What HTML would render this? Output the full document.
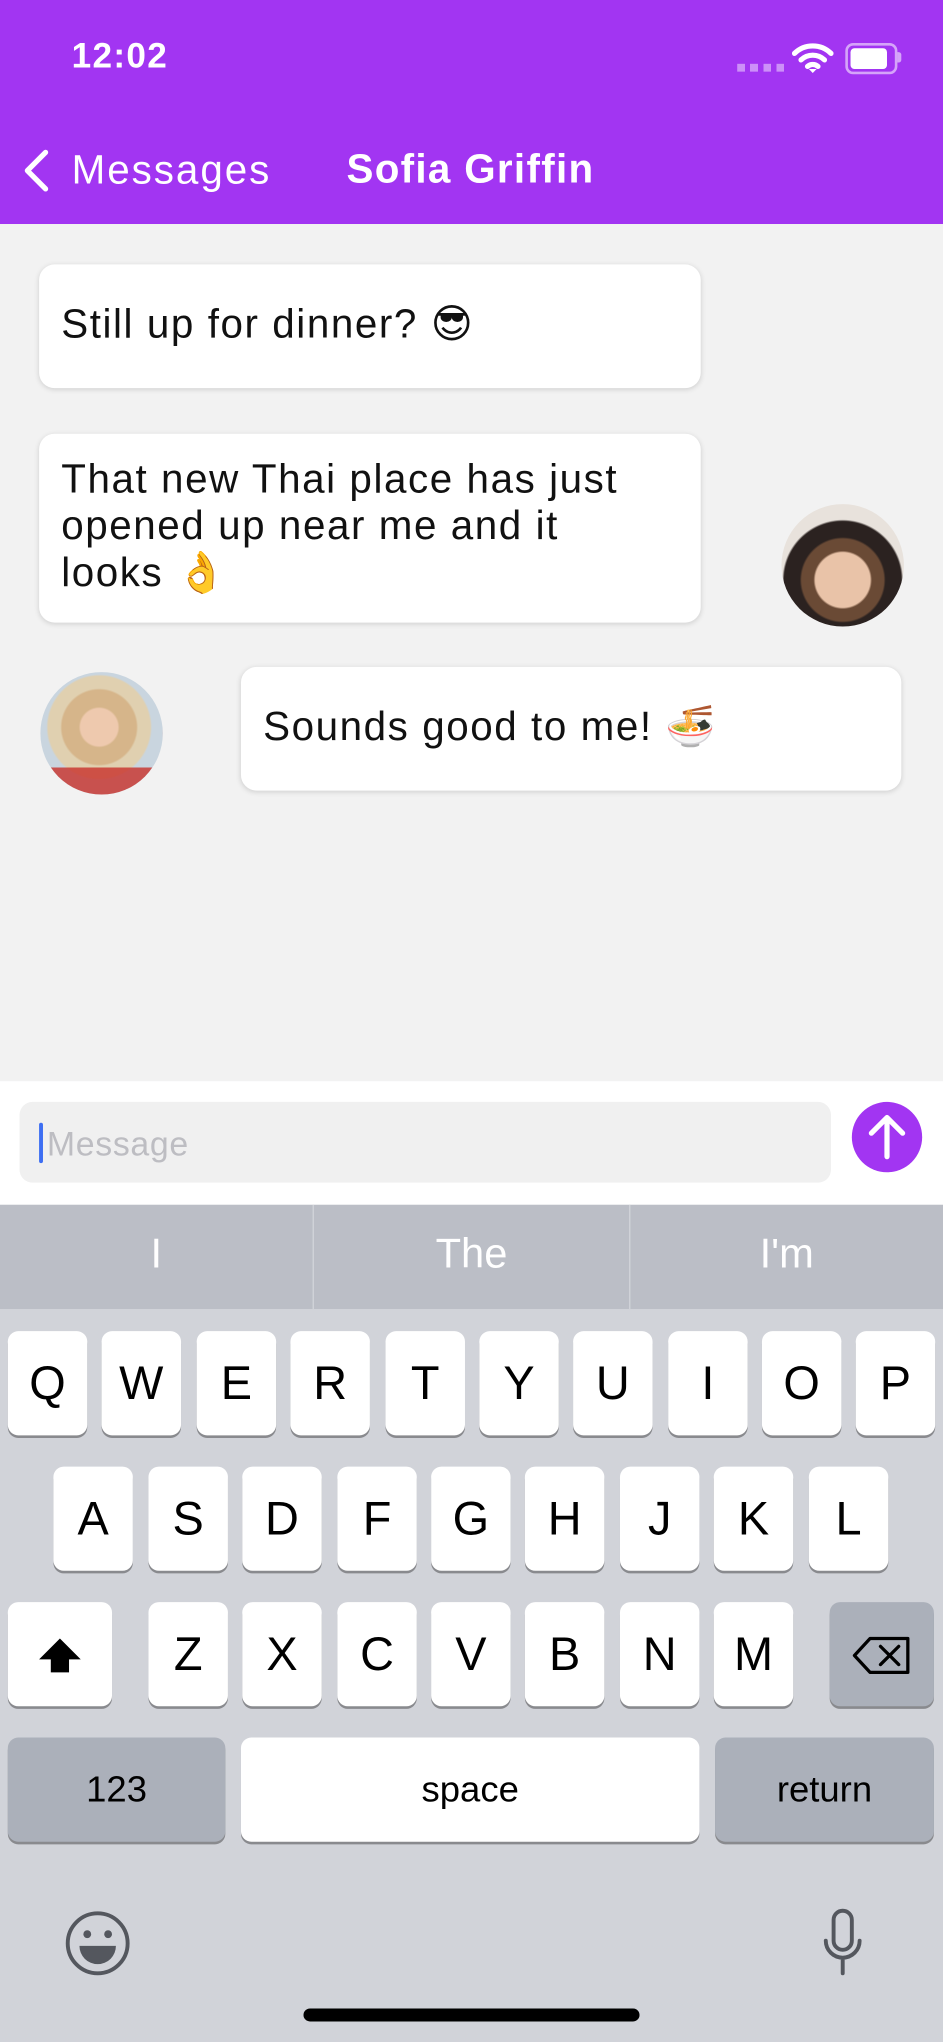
<!DOCTYPE html>
<html><head><meta charset="utf-8"><style>
html,body{margin:0;padding:0;width:943px;height:2042px;overflow:hidden;background:#d1d3d9}
#w{position:absolute;left:0;top:0;width:724px;height:1568px;transform:scale(1.30249);transform-origin:0 0;font-family:"Liberation Sans","DejaVu Sans",sans-serif}
.a{position:absolute}
.hdr{left:0;top:0;width:724px;height:172px;background:#a235f2;color:#fff}
.chat{left:0;top:172px;width:724px;height:658px;background:#f2f2f2}
.b{background:#fff;border-radius:12px;box-shadow:0 1px 4px rgba(0,0,0,.15);font-size:31px;letter-spacing:1.2px;color:#111;line-height:36px;box-sizing:border-box;padding-left:17px;padding-right:40px}
.key{position:absolute;background:#fff;border-radius:8px;box-shadow:0 2px 0 #898a8e;text-align:center;font-size:36px;line-height:80px;color:#000;height:80px;width:61px}
.dk{background:#abb0ba}
.av{border-radius:50%;width:94px;height:94px}
</style></head><body><div id="w">
<div class="a hdr">
 <div class="a" style="left:55px;top:28px;font-size:27px;font-weight:bold;letter-spacing:1px">12:02</div>
 <div class="a" style="left:566px;top:49px;width:36px;height:6px;background:repeating-linear-gradient(90deg,rgba(255,255,255,.45) 0 6px,transparent 6px 10px)"></div>
 <svg class="a" style="left:608px;top:32px" width="32" height="24" viewBox="0 0 32 24"><path d="M2 9a20 20 0 0 1 28 0M7 14a13 13 0 0 1 18 0M12 19a6 6 0 0 1 8 0" stroke="#fff" stroke-width="4" fill="none" stroke-linecap="round"/><path d="M13 21l3 3 3-3z" fill="#fff"/></svg>
 <div class="a" style="left:649px;top:33px;width:36px;height:20px;border:2px solid rgba(255,255,255,.55);border-radius:6px"></div>
 <div class="a" style="left:653px;top:37px;width:28px;height:16px;background:#fff;border-radius:3px"></div>
 <div class="a" style="left:689px;top:40px;width:3px;height:8px;background:rgba(255,255,255,.55);border-radius:0 2px 2px 0"></div>
 <svg class="a" style="left:16px;top:114px" width="24" height="34" viewBox="0 0 24 34"><path d="M19 3L5 17l14 14" stroke="#fff" stroke-width="4" fill="none" stroke-linecap="round" stroke-linejoin="round"/></svg>
 <div class="a" style="left:55px;top:113px;font-size:31px;letter-spacing:1.5px">Messages</div>
 <div class="a" style="left:266px;top:112px;font-size:31px;font-weight:bold;letter-spacing:1px">Sofia Griffin</div>
</div>
<div class="a chat"></div>
<div class="a b" style="left:30px;top:203px;width:508px;height:95px;padding-top:28px">Still up for dinner? 😎</div>
<div class="a b" style="left:30px;top:333px;width:508px;height:145px;padding-top:17px;line-height:36px">That new Thai place has just opened up near me and it looks 👌</div>
<div class="a av" style="left:600px;top:387px;background:radial-gradient(circle at 50% 62%,#e9c3a8 0 28%,#6a4a35 30% 42%,#2b2220 44% 60%,#e8e2dc 62%)"></div>
<div class="a av" style="left:31px;top:516px;background:radial-gradient(circle at 48% 45%,#eec9ae 0 20%,#d6b58a 22% 40%,#e0d0b0 42% 55%,#c9d5df 57%),linear-gradient(#ccd,#c33)"></div>
<div class="a av" style="left:31px;top:516px;background:linear-gradient(transparent 78%,#c8302a 78%);opacity:.8"></div>
<div class="a b" style="left:185px;top:512px;width:507px;height:95px;padding-top:28px">Sounds good to me! 🍜</div>
<div class="a" style="left:0;top:830px;width:724px;height:95px;background:#fff"></div>
<div class="a" style="left:15px;top:846px;width:623px;height:62px;background:#f0f0f0;border-radius:10px"></div>
<div class="a" style="left:30px;top:862px;width:3px;height:31px;background:#3d6ef2;border-radius:2px"></div>
<div class="a" style="left:36px;top:863px;font-size:26px;letter-spacing:.5px;color:#bdbdc2">Message</div>
<div class="a" style="left:654px;top:846px;width:54px;height:54px;border-radius:50%;background:#a235f2"></div>
<svg class="a" style="left:654px;top:846px" width="54" height="54" viewBox="0 0 54 54"><path d="M27 42V12M15 24l12-12 12 12" stroke="#fff" stroke-width="4" fill="none" stroke-linecap="round" stroke-linejoin="round"/></svg>
<div class="a" style="left:0;top:925px;width:724px;height:80px;background:#bbbec6;color:#fff;font-size:32px">
 <div class="a" style="left:0;width:240px;text-align:center;top:19px">I</div>
 <div class="a" style="left:240px;top:0;width:1px;height:80px;background:#d3d5da"></div>
 <div class="a" style="left:241px;width:242px;text-align:center;top:19px">The</div>
 <div class="a" style="left:483px;top:0;width:1px;height:80px;background:#d3d5da"></div>
 <div class="a" style="left:484px;width:240px;text-align:center;top:19px">I'm</div>
</div>
<div class="a" style="left:0;top:1005px;width:724px;height:563px;background:#d1d3d9">
<div style="position:relative;top:-1005px">
 <div class="key" style="left:6px;top:1022px">Q</div><div class="key" style="left:78px;top:1022px">W</div><div class="key" style="left:151px;top:1022px">E</div><div class="key" style="left:223px;top:1022px">R</div><div class="key" style="left:296px;top:1022px">T</div><div class="key" style="left:368px;top:1022px">Y</div><div class="key" style="left:440px;top:1022px">U</div><div class="key" style="left:513px;top:1022px">I</div><div class="key" style="left:585px;top:1022px">O</div><div class="key" style="left:657px;top:1022px">P</div>
 <div class="key" style="left:41px;top:1126px">A</div><div class="key" style="left:114px;top:1126px">S</div><div class="key" style="left:186px;top:1126px">D</div><div class="key" style="left:259px;top:1126px">F</div><div class="key" style="left:331px;top:1126px">G</div><div class="key" style="left:403px;top:1126px">H</div><div class="key" style="left:476px;top:1126px">J</div><div class="key" style="left:548px;top:1126px">K</div><div class="key" style="left:621px;top:1126px">L</div>
 <div class="key" style="left:6px;top:1230px;width:80px"><svg width="40" height="36" viewBox="0 0 40 36" style="margin-top:24px"><path d="M20 4L4 20h9v10h14V20h9z" fill="#000"/></svg></div>
 <div class="key" style="left:114px;top:1230px">Z</div><div class="key" style="left:186px;top:1230px">X</div><div class="key" style="left:259px;top:1230px">C</div><div class="key" style="left:331px;top:1230px">V</div><div class="key" style="left:403px;top:1230px">B</div><div class="key" style="left:476px;top:1230px">N</div><div class="key" style="left:548px;top:1230px">M</div>
 <div class="key dk" style="left:637px;top:1230px;width:80px"><svg width="46" height="30" viewBox="0 0 46 30" style="margin-top:26px"><path d="M14 2h29v26H14L2 15z" stroke="#000" stroke-width="2.5" fill="none" stroke-linejoin="round"/><path d="M22 8l14 14M36 8L22 22" stroke="#000" stroke-width="2.5" stroke-linecap="round"/></svg></div>
 <div class="key dk" style="left:6px;top:1334px;width:167px;font-size:28px">123</div>
 <div class="key" style="left:185px;top:1334px;width:352px;font-size:28px">space</div>
 <div class="key dk" style="left:549px;top:1334px;width:168px;font-size:28px">return</div>
 <svg class="a" style="left:49px;top:1466px" width="52" height="52" viewBox="0 0 52 52"><circle cx="26" cy="26" r="23" stroke="#54575e" stroke-width="3" fill="none"/><circle cx="18" cy="19" r="3" fill="#54575e"/><circle cx="34" cy="19" r="3" fill="#54575e"/><path d="M12 28h28a14 14 0 0 1-28 0z" fill="#54575e"/></svg>
 <svg class="a" style="left:630px;top:1464px" width="34" height="56" viewBox="0 0 34 56"><rect x="10" y="3" width="14" height="30" rx="7" stroke="#54575e" stroke-width="3" fill="none"/><path d="M4 26a13 13 0 0 0 26 0M17 39v12" stroke="#54575e" stroke-width="3" fill="none" stroke-linecap="round"/></svg>
 <div class="a" style="left:233px;top:1542px;width:258px;height:10px;background:#000;border-radius:5px"></div>
</div></div>
</div></body></html>
